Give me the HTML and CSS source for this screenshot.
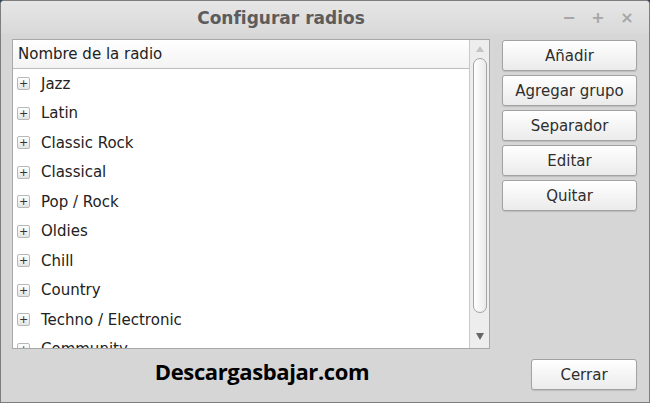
FILE: index.html
```html
<!DOCTYPE html>
<html lang="es">

<head>
    <meta charset="UTF-8">
    <title>Configurar radios</title>
    <link rel="stylesheet" href="styles.css">
</head>

<body>
    <div class="window">
        <div class="titlebar">
            <span class="title">Configurar radios</span>
            <div class="controls">
                <span class="ctl">&minus;</span>
                <span class="ctl">+</span>
                <span class="ctl">&times;</span>
            </div>
        </div>

        <div class="main">
            <div class="list">
                <div class="tree">
                    <div class="header">Nombre de la radio</div>
                    <div class="rows">
                        <div class="row"><span class="expander">+</span>Jazz</div>
                        <div class="row"><span class="expander">+</span>Latin</div>
                        <div class="row"><span class="expander">+</span>Classic Rock</div>
                        <div class="row"><span class="expander">+</span>Classical</div>
                        <div class="row"><span class="expander">+</span>Pop / Rock</div>
                        <div class="row"><span class="expander">+</span>Oldies</div>
                        <div class="row"><span class="expander">+</span>Chill</div>
                        <div class="row"><span class="expander">+</span>Country</div>
                        <div class="row"><span class="expander">+</span>Techno / Electronic</div>
                        <div class="row"><span class="expander">+</span>Community</div>
                    </div>
                </div>
                <div class="scrollbar">
                    <span class="arrow up"></span>
                    <span class="thumb"></span>
                    <span class="arrow down"></span>
                </div>
            </div>

            <div class="buttons">
                <button>Añadir</button>
                <button>Agregar grupo</button>
                <button>Separador</button>
                <button>Editar</button>
                <button>Quitar</button>
            </div>
        </div>

        <div class="footer">
            <div class="watermark">Descargasbajar.com</div>
            <button class="close">Cerrar</button>
        </div>
    </div>
</body>

</html>
```

FILE: styles.css
```css
body {
    margin: 0;
    background-color: #2c4660;
    font-family: "DejaVu Sans", sans-serif;
    color: #2a2a2a;
}

.window {
    width: 650px;
    height: 403px;
    box-sizing: border-box;
    border: 1px solid #7e7e7e;
    border-radius: 4px 4px 0 0;
    background-color: #d6d6d6;
    overflow: hidden;
}

.titlebar {
    height: 33px;
    display: flex;
    align-items: center;
    justify-content: center;
    padding-right: 88px;
    position: relative;
    background: linear-gradient(#e6e6e6, #d9d9d9);
}

.title {
    font-weight: bold;
    font-size: 17px;
    color: #5c5c5c;
}

.controls {
    position: absolute;
    right: 14px;
    top: 7px;
    display: flex;
    gap: 13px;
}

.ctl {
    width: 16px;
    text-align: center;
    font-size: 16px;
    font-weight: bold;
    color: #a6a6a6;
}

.main {
    display: flex;
    padding: 5px 12px 0 11px;
}

.list {
    width: 478px;
    height: 310px;
    box-sizing: border-box;
    border: 1px solid #a9a9a9;
    background-color: #fff;
    display: flex;
    overflow: hidden;
}

.tree {
    flex: 1;
    border-right: 1px solid #c9c9c9;
    overflow: hidden;
}

.header {
    height: 28px;
    line-height: 28px;
    padding-left: 5px;
    font-size: 15px;
    color: #222;
    border-bottom: 1px solid #bdbdbd;
    background: linear-gradient(#ffffff, #f3f3f3);
}

.row {
    height: 29.5px;
    display: flex;
    align-items: center;
    font-size: 15px;
    color: #222;
}

.expander {
    width: 11px;
    height: 11px;
    margin: 0 11px 0 4px;
    border: 1px solid #b8b8b8;
    border-radius: 2px;
    background: linear-gradient(#ffffff, #e4e4e4);
    font-size: 11px;
    line-height: 11px;
    text-align: center;
    color: #333;
}

.scrollbar {
    width: 19px;
    display: flex;
    flex-direction: column;
    align-items: center;
    background-color: #ededed;
}

.arrow {
    width: 0;
    height: 0;
    border-left: 4px solid transparent;
    border-right: 4px solid transparent;
}

.arrow.up {
    margin-top: 6px;
    border-bottom: 6px solid #c4c4c4;
}

.arrow.down {
    margin-top: 20px;
    border-top: 7px solid #666;
}

.thumb {
    width: 14px;
    height: 255px;
    margin-top: 6px;
    box-sizing: border-box;
    border: 1px solid #a3a3a3;
    border-radius: 7px;
    background: linear-gradient(90deg, #ffffff, #e9e9e9);
}

.buttons {
    display: flex;
    flex-direction: column;
    gap: 4px;
    margin: 1px 0 0 12px;
}

button {
    width: 135px;
    height: 31px;
    border: 1px solid #a2a2a2;
    border-radius: 3px;
    background: linear-gradient(#ffffff, #ebebeb);
    box-shadow: 0 1px 1px rgba(0, 0, 0, 0.12);
    font-family: "DejaVu Sans", sans-serif;
    font-size: 15px;
    color: #2e2e2e;
    padding: 0;
}

.footer {
    display: flex;
    align-items: flex-start;
    padding: 10px 12px 0 11px;
}

.watermark {
    width: 500px;
    margin-top: 1px;
    line-height: 22px;
    text-align: center;
    font-family: "Open Sans", sans-serif;
    font-weight: bold;
    font-size: 22px;
    letter-spacing: -0.4px;
    color: #000;
}

.close {
    width: 106px;
    margin-left: auto;
}
```
